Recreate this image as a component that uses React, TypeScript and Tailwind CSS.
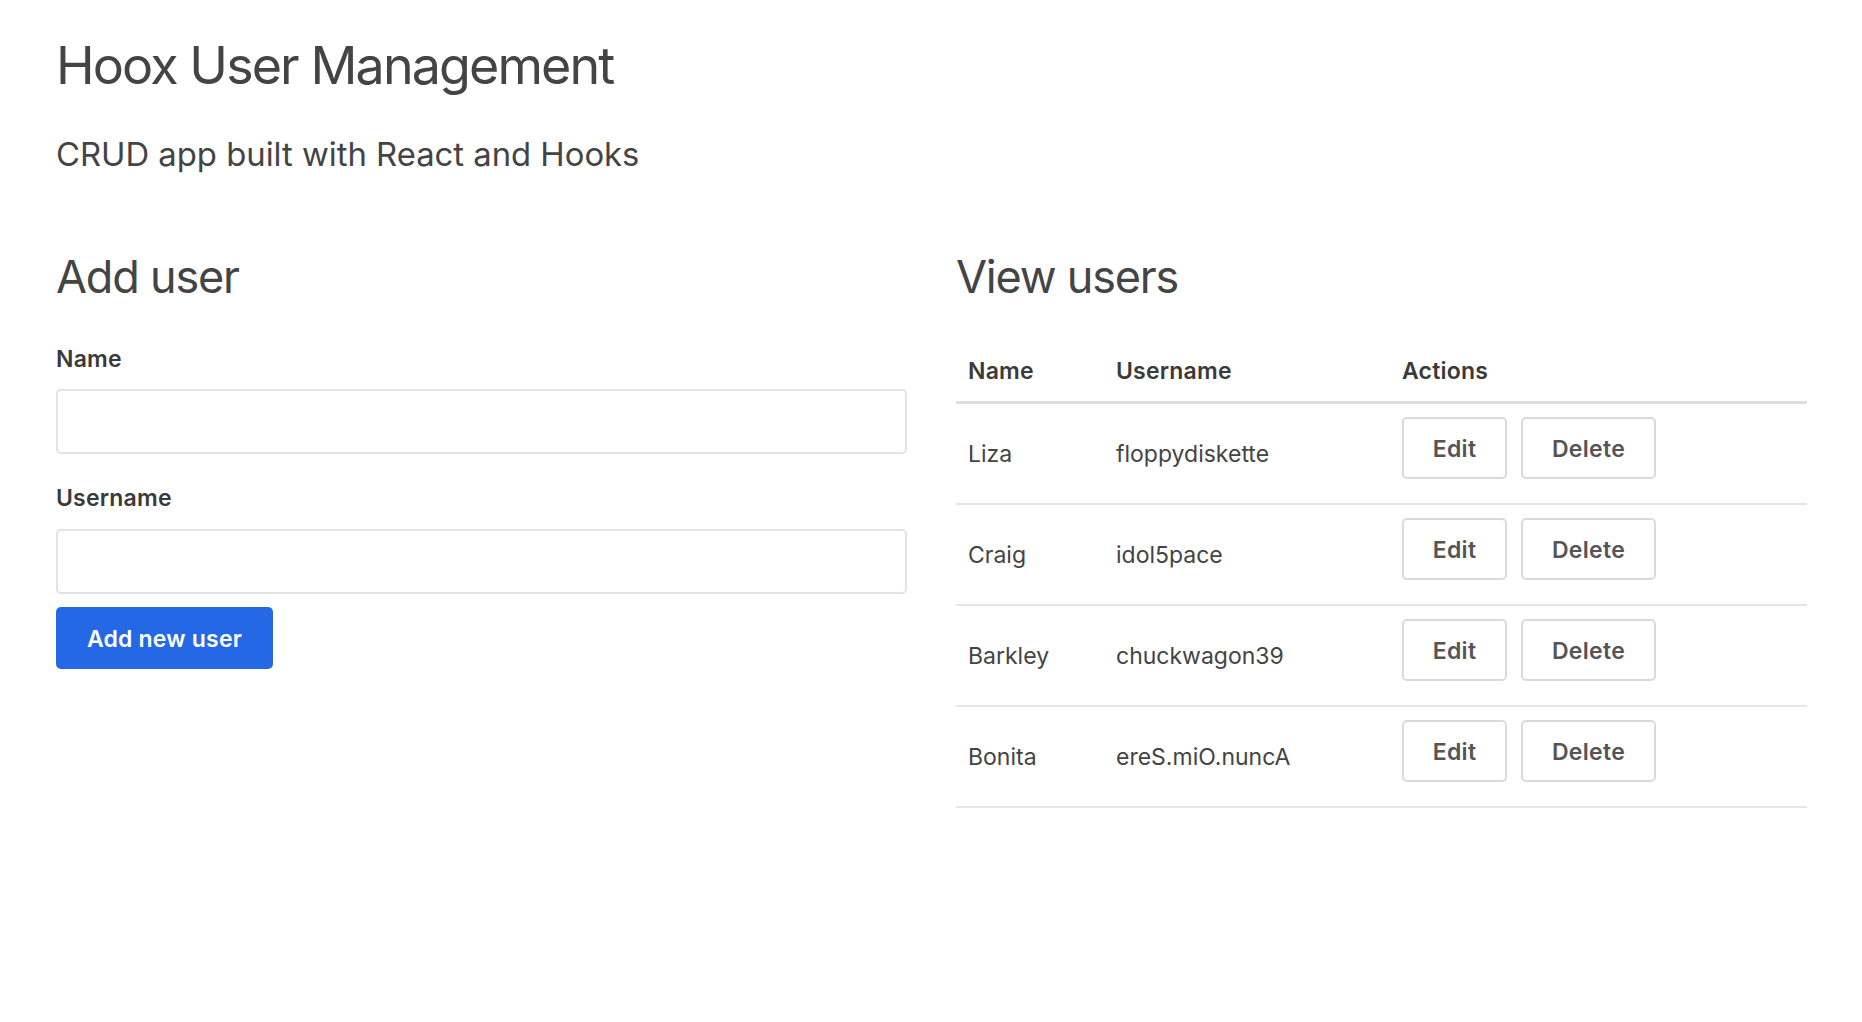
import React from "react";

const users = [
  { name: "Liza", username: "floppydiskette" },
  { name: "Craig", username: "idol5pace" },
  { name: "Barkley", username: "chuckwagon39" },
  { name: "Bonita", username: "ereS.miO.nuncA" },
];

export default function App() {
  return (
    <div
      className="min-h-[1022px] bg-white pl-[56px] pr-[55px] pt-[34px] text-[#444]"
      style={{ fontFamily: "Inter, 'Noto Sans', sans-serif" }}
    >
      <h1 className="text-[52px] leading-[64px] font-normal tracking-[-1.9px] text-[#444]">
        Hoox User Management
      </h1>
      <p className="mt-[36px] text-[32.8px] leading-[40px] font-normal text-[#444]">
        CRUD app built with React and Hooks
      </p>

      <div className="mt-[75px] grid grid-cols-2 gap-[49px]">
        <div className="flex flex-col">
          <h2 className="text-[45px] leading-[56px] font-normal tracking-[-1.2px] text-[#444]">
            Add user
          </h2>
          <form className="mt-[40px] flex flex-col" onSubmit={(e) => e.preventDefault()}>
            <label className="text-[23px] leading-[28px] font-semibold tracking-[0.2px] text-[#3a3a3a]">
              Name
            </label>
            <input
              type="text"
              className="mt-[16px] h-[65px] w-full rounded-[5px] border-2 border-[#e3e3e3] bg-white px-4 outline-none"
            />
            <label className="mt-[30px] text-[23px] leading-[28px] font-semibold tracking-[0.2px] text-[#3a3a3a]">
              Username
            </label>
            <input
              type="text"
              className="mt-[17px] h-[65px] w-full rounded-[5px] border-2 border-[#e3e3e3] bg-white px-4 outline-none"
            />
            <div className="mt-[13px]">
              <button
                type="submit"
                className="h-[62px] w-[217px] rounded-[5px] bg-[#2468e6] pt-[2px] text-[23px] leading-[28px] font-semibold tracking-[0.2px] text-white"
              >
                Add new user
              </button>
            </div>
          </form>
        </div>

        <div className="flex flex-col">
          <h2 className="text-[45px] leading-[56px] font-normal tracking-[-1.2px] text-[#444]">
            View users
          </h2>
          <table className="mt-[36px] w-full table-fixed border-collapse text-left">
            <colgroup>
              <col className="w-[148px]" />
              <col className="w-[286px]" />
              <col />
            </colgroup>
            <thead>
              <tr className="border-b-[3px] border-[#dedede]">
                <th className="pl-[12px] pt-[16px] pb-[16px] text-[23px] leading-[28px] font-semibold tracking-[0.2px] text-[#3a3a3a]">
                  Name
                </th>
                <th className="pl-[12px] pt-[16px] pb-[16px] text-[23px] leading-[28px] font-semibold tracking-[0.2px] text-[#3a3a3a]">
                  Username
                </th>
                <th className="pl-[12px] pt-[16px] pb-[16px] text-[23px] leading-[28px] font-semibold tracking-[0.2px] text-[#3a3a3a]">
                  Actions
                </th>
              </tr>
            </thead>
            <tbody>
              {users.map((u) => (
                <tr key={u.name} className="border-b-2 border-[#e6e6e6]">
                  <td className="pl-[12px] py-[13px] align-middle text-[23px] leading-[28px] text-[#444]">
                    {u.name}
                  </td>
                  <td className="pl-[12px] py-[13px] align-middle text-[23px] leading-[28px] text-[#444]">
                    {u.username}
                  </td>
                  <td className="pl-[12px] py-[13px] align-middle">
                    <div className="mb-[11px] flex gap-[14px]">
                      <button className="h-[62px] w-[105px] rounded-[5px] border-2 border-[#dadada] bg-white pt-[1px] text-[23px] leading-[28px] font-semibold tracking-[0.3px] text-[#555]">
                        Edit
                      </button>
                      <button className="h-[62px] w-[135px] rounded-[5px] border-2 border-[#dadada] bg-white pt-[1px] text-[23px] leading-[28px] font-semibold tracking-[0.3px] text-[#555]">
                        Delete
                      </button>
                    </div>
                  </td>
                </tr>
              ))}
            </tbody>
          </table>
        </div>
      </div>
    </div>
  );
}
